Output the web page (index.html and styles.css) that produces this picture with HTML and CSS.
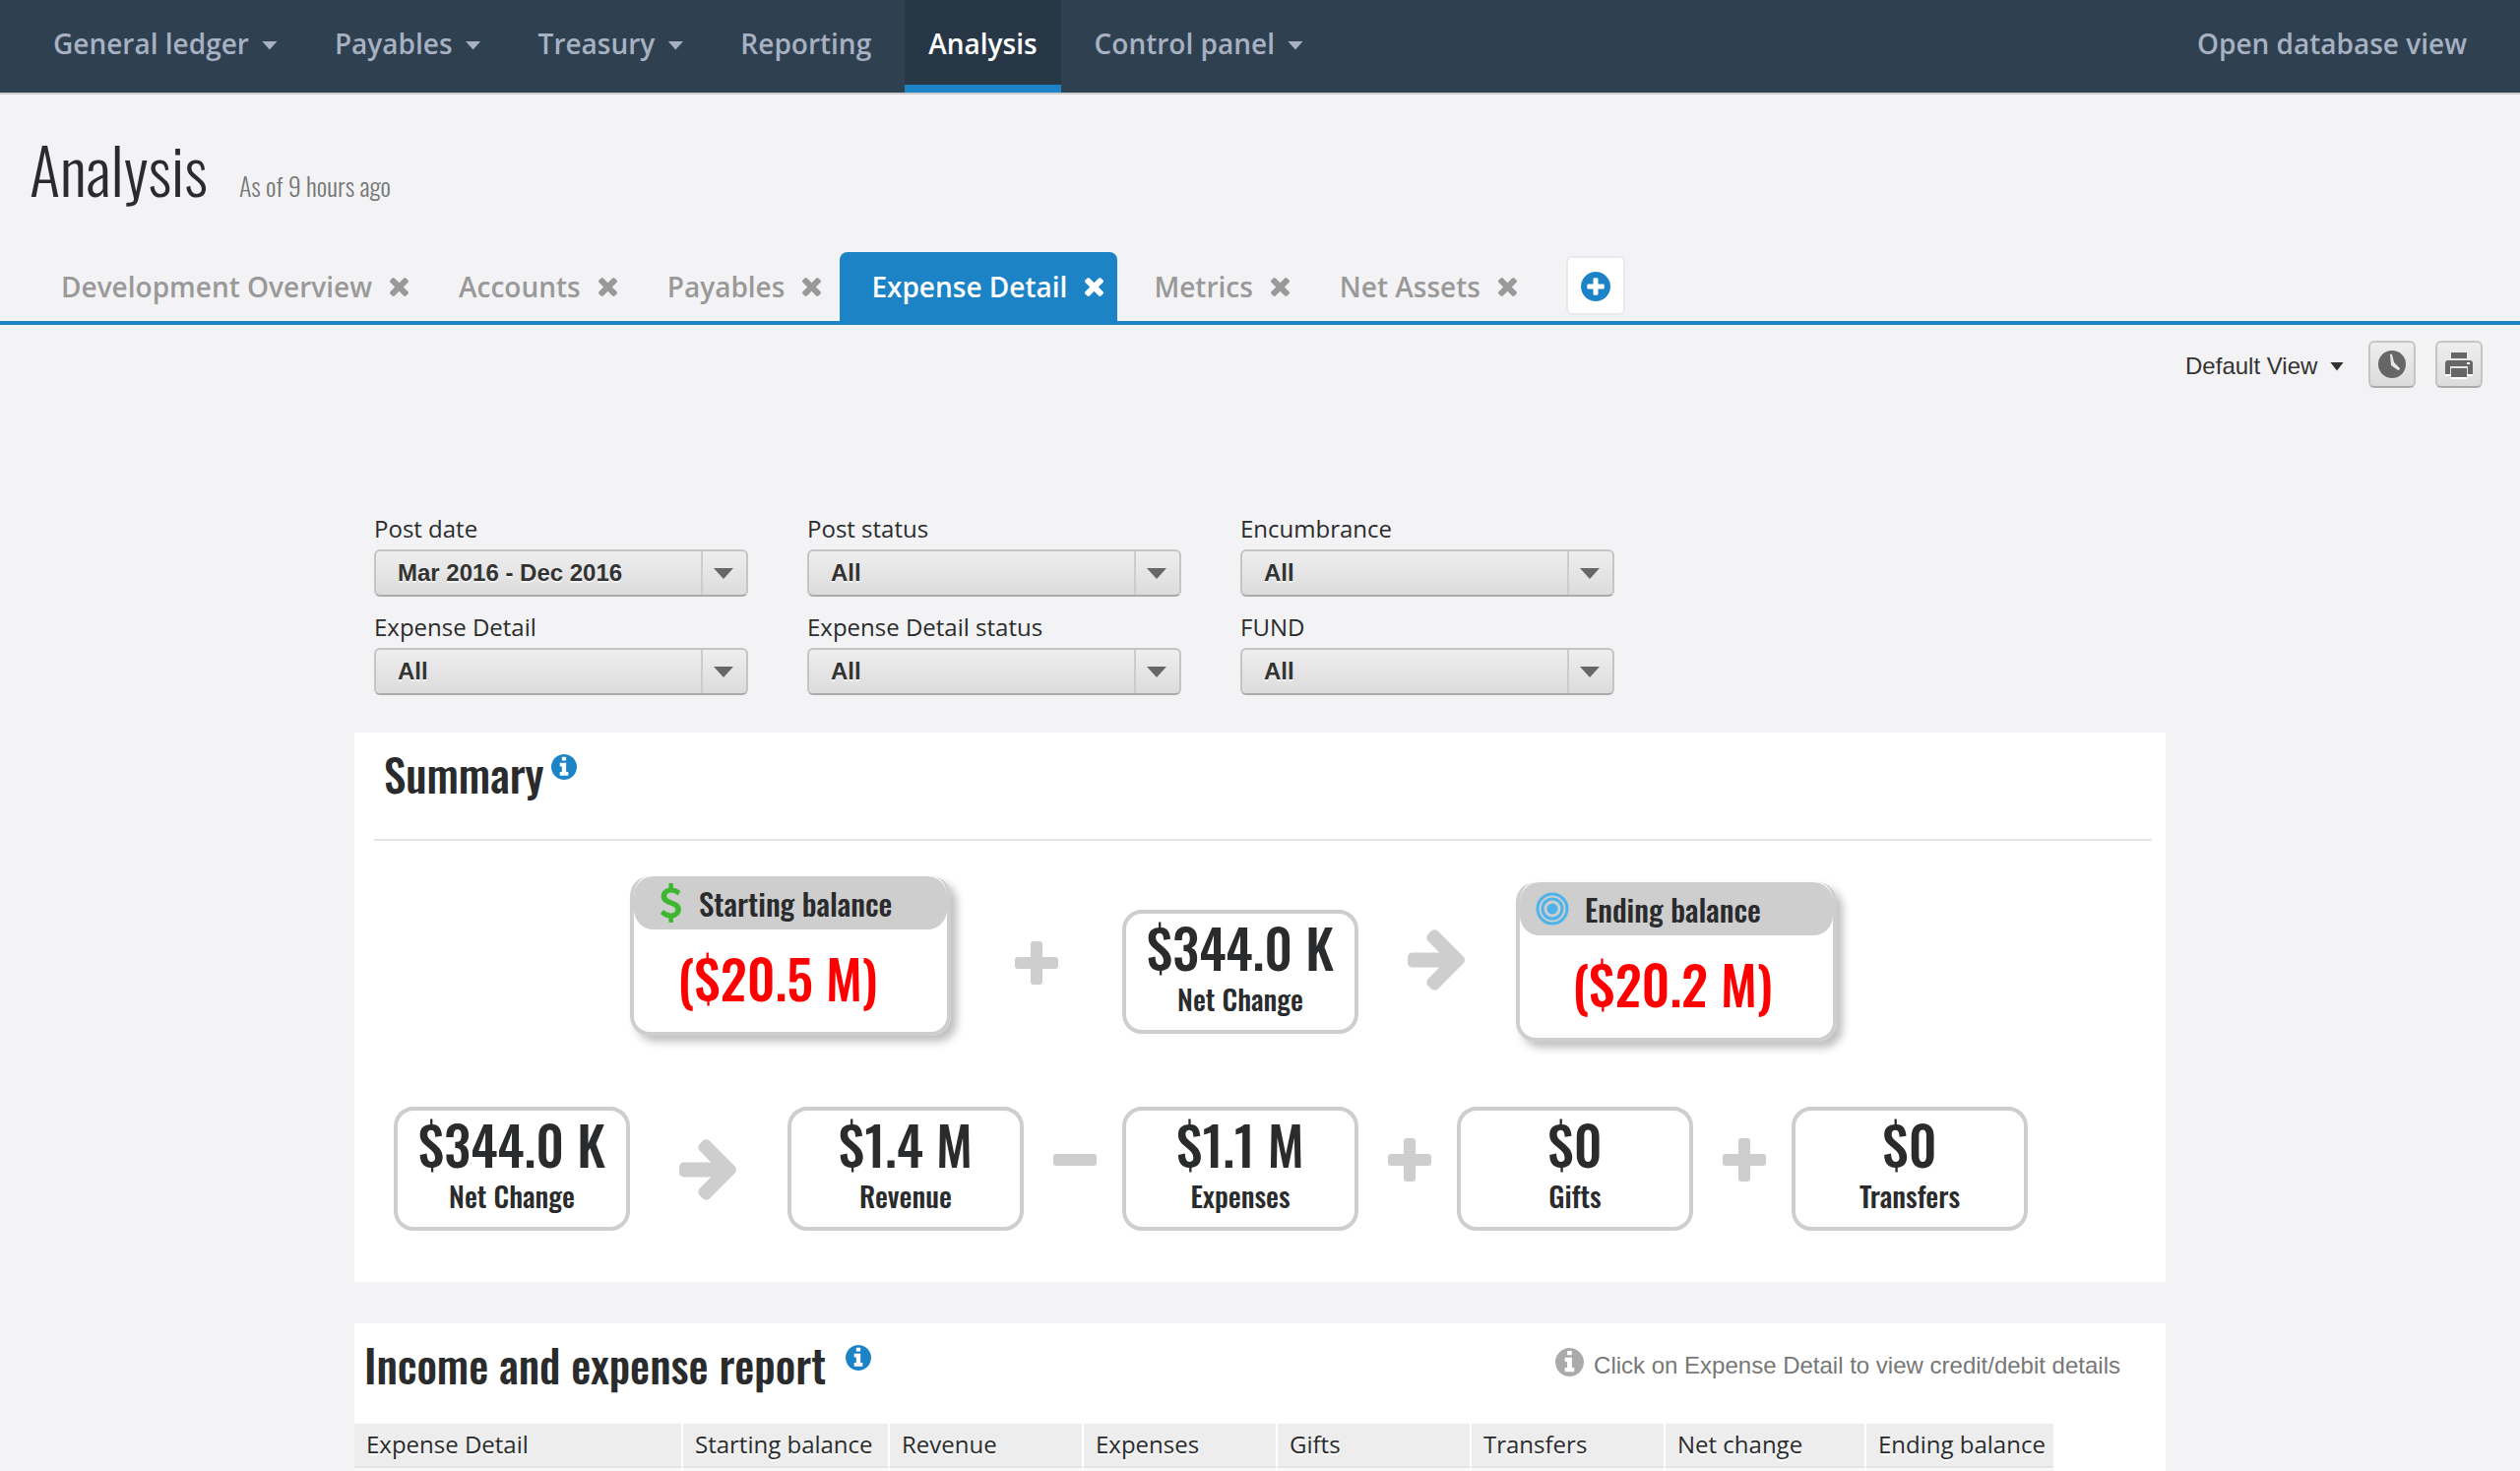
FILE: index.html
```html
<!DOCTYPE html>
<html lang="en">
<head>
<meta charset="utf-8">
<title>Analysis</title>
<link rel="stylesheet" href="styles.css">
</head>
<body>
<svg class="sprite" aria-hidden="true">
  <symbol id="times" viewBox="302 366 1188 1188"><path d="M1490 1322q0 40-28 68l-136 136q-28 28-68 28t-68-28l-294-294-294 294q-28 28-68 28t-68-28l-136-136q-28-28-28-68t28-68l294-294-294-294q-28-28-28-68t28-68l136-136q28-28 68-28t68 28l294 294 294-294q28-28 68-28t68 28l136 136q28 28 28 68t-28 68l-294 294 294 294q28 28 28 68z"/></symbol>
  <symbol id="info" viewBox="128 128 1536 1536"><path d="M1152 1376v-160q0-14-9-23t-23-9h-96v-512q0-14-9-23t-23-9h-320q-14 0-23 9t-9 23v160q0 14 9 23t23 9h96v320h-96q-14 0-23 9t-9 23v160q0 14 9 23t23 9h448q14 0 23-9t9-23zm-128-896v-160q0-14-9-23t-23-9h-192q-14 0-23 9t-9 23v160q0 14 9 23t23 9h192q14 0 23-9t9-23zm640 416q0 209-103 385.500t-279.500 279.500-385.500 103-385.500-103-279.500-279.500-103-385.500 103-385.500 279.500-279.500 385.500-103 385.500 103 279.500 279.500 103 385.500z"/></symbol>
  <symbol id="add" viewBox="128 128 1536 1536"><path d="M1344 960v-128q0-26-19-45t-45-19h-256v-256q0-26-19-45t-45-19h-128q-26 0-45 19t-19 45v256h-256q-26 0-45 19t-19 45v128q0 26 19 45t45 19h256v256q0 26 19 45t45 19h128q26 0 45-19t19-45v-256h256q26 0 45-19t19-45zm320-64q0 209-103 385.500t-279.500 279.500-385.500 103-385.500-103-279.500-279.500-103-385.500 103-385.500 279.500-279.500 385.500-103 385.500 103 279.500 279.500 103 385.500z"/></symbol>
  <symbol id="arrow" viewBox="128 181 1472 1558"><path d="M1600 960q0 54-37 91l-651 651q-39 37-91 37-51 0-90-37l-75-75q-38-38-38-91t38-91l293-293h-704q-52 0-84.500-37.500t-32.500-90.500v-128q0-53 32.500-90.500t84.500-37.500h704l-293-294q-38-36-38-90t38-90l75-75q38-38 90-38 53 0 91 38l651 651q37 35 37 90z"/></symbol>
  <symbol id="plus" viewBox="0 0 44 44"><rect x="16" width="12" height="44" rx="3"/><rect y="16" width="44" height="12" rx="3"/></symbol>
  <symbol id="minus" viewBox="0 0 44 44"><rect y="16" width="44" height="12" rx="3"/></symbol>
  <symbol id="dollar" viewBox="434 0 928 1792"><path d="M1362 1185q0 153-99.500 263.500t-258.500 136.500v175q0 14-9 23t-23 9h-135q-13 0-22.500-9.500t-9.500-22.500v-175q-66-9-127.500-31t-101.500-44.500-74-48-46.500-37.500-17.500-18q-17-21-2-41l103-135q7-10 23-12 15-2 24 9l2 2q113 99 243 125 37 8 74 8 81 0 142.500-43t61.500-122q0-28-15-53t-33.500-42-58.500-37.500-66-32-80-32.500q-39-16-61.500-25t-61.500-26.500-62.500-31-56.500-35.500-53.500-42.500-43.500-49-35.500-58-21-66.500-8.500-78q0-138 98-242t255-134v-180q0-13 9.500-22.500t22.500-9.500h135q14 0 23 9t9 23v176q57 6 110.500 23t87 33.500 63.500 37.500 39 29 15 14q17 18 5 38l-81 146q-8 15-23 16-14 3-27-7-3-3-14.500-12t-39-26.500-58.500-32-74.500-26-85.500-11.500q-95 0-155 43t-60 111q0 26 8.500 48t29.500 41.500 39.500 33 56 31 60.500 27 70 27.500q53 20 81 31.500t76 35 75.500 42.500 62 50 53 63.500 31.500 76.500 13 94z"/></symbol>
</svg>

<header class="topbar">
  <nav class="menu" aria-label="Main">
    <a class="menu-item" href="#">General ledger <span class="caret"></span></a>
    <a class="menu-item" href="#">Payables <span class="caret"></span></a>
    <a class="menu-item" href="#">Treasury <span class="caret"></span></a>
    <a class="menu-item" href="#">Reporting</a>
    <a class="menu-item active" href="#" aria-current="page">Analysis</a>
    <a class="menu-item" href="#">Control panel <span class="caret"></span></a>
  </nav>
  <a class="menu-item" href="#">Open database view</a>
</header>

<div class="page-head">
  <h1>Analysis</h1>
  <span class="as-of">As of 9 hours ago</span>
</div>

<nav class="tabs" aria-label="Dashboards">
  <div class="tab"><a href="#">Development Overview</a><button type="button" aria-label="Close"><svg class="x"><use href="#times"/></svg></button></div>
  <div class="tab"><a href="#">Accounts</a><button type="button" aria-label="Close"><svg class="x"><use href="#times"/></svg></button></div>
  <div class="tab"><a href="#">Payables</a><button type="button" aria-label="Close"><svg class="x"><use href="#times"/></svg></button></div>
  <div class="tab active"><a href="#">Expense Detail</a><button type="button" aria-label="Close"><svg class="x"><use href="#times"/></svg></button></div>
  <div class="tab"><a href="#">Metrics</a><button type="button" aria-label="Close"><svg class="x"><use href="#times"/></svg></button></div>
  <div class="tab"><a href="#">Net Assets</a><button type="button" aria-label="Close"><svg class="x"><use href="#times"/></svg></button></div>
  <button class="tab-add" type="button" aria-label="Add tab"><svg><use href="#add"/></svg></button>
</nav>

<div class="toolbar">
  <button class="view" type="button">Default View <span class="caret"></span></button>
  <button class="tool" type="button" aria-label="History"><svg viewBox="0 0 30 30"><circle cx="15" cy="15" r="14"/><path class="hand" d="M13 5q1-1 2 0l2 8 6 6q0 2-2 2l-7-5z"/></svg></button>
  <button class="tool" type="button" aria-label="Print"><svg viewBox="0 0 30 30"><path class="sheen" d="M1 25h28v2H23v3H7v-3H1z"/><path d="M7 3h16v6H7zM4 11h22a3 3 0 0 1 3 3v11h-5v-8H6v8H1V14a3 3 0 0 1 3-3zM7 19h16v9H7z"/><rect class="sheen" x="23" y="13" width="3" height="2"/></svg></button>
</div>

<main class="content">
  <form class="filters">
    <div class="field"><label for="f1">Post date</label><div class="select"><select id="f1"><option>Mar 2016 - Dec 2016</option></select></div></div>
    <div class="field"><label for="f2">Post status</label><div class="select"><select id="f2"><option>All</option></select></div></div>
    <div class="field"><label for="f3">Encumbrance</label><div class="select"><select id="f3"><option>All</option></select></div></div>
    <div class="field"><label for="f4">Expense Detail</label><div class="select"><select id="f4"><option>All</option></select></div></div>
    <div class="field"><label for="f5">Expense Detail status</label><div class="select"><select id="f5"><option>All</option></select></div></div>
    <div class="field"><label for="f6">FUND</label><div class="select"><select id="f6"><option>All</option></select></div></div>
  </form>

  <section class="panel summary">
    <div class="summary-head"><h2>Summary</h2><svg class="info"><use href="#info"/></svg></div>
    <div class="flow balances">
      <div class="balance">
        <div class="balance-head"><svg class="dollar"><use href="#dollar"/></svg><span>Starting balance</span></div>
        <div class="value negative">($20.5 M)</div>
      </div>
      <svg class="op"><use href="#plus"/></svg>
      <div class="box"><div class="value">$344.0 K</div><div class="caption">Net Change</div></div>
      <svg class="op arrow"><use href="#arrow"/></svg>
      <div class="balance ending">
        <div class="balance-head"><svg class="target" viewBox="0 0 34 34"><circle cx="17" cy="17" r="15"/><circle cx="17" cy="17" r="10"/><circle class="dot" cx="17" cy="17" r="4"/></svg><span>Ending balance</span></div>
        <div class="value negative">($20.2 M)</div>
      </div>
    </div>
    <div class="flow changes">
      <div class="box"><div class="value">$344.0 K</div><div class="caption">Net Change</div></div>
      <svg class="op arrow"><use href="#arrow"/></svg>
      <div class="box"><div class="value">$1.4 M</div><div class="caption">Revenue</div></div>
      <svg class="op"><use href="#minus"/></svg>
      <div class="box"><div class="value">$1.1 M</div><div class="caption">Expenses</div></div>
      <svg class="op"><use href="#plus"/></svg>
      <div class="box"><div class="value">$0</div><div class="caption">Gifts</div></div>
      <svg class="op"><use href="#plus"/></svg>
      <div class="box"><div class="value">$0</div><div class="caption">Transfers</div></div>
    </div>
  </section>

  <section class="panel report">
    <div class="report-head">
      <h2>Income and expense report</h2><svg class="info"><use href="#info"/></svg>
      <p class="hint"><svg><use href="#info"/></svg>Click on Expense Detail to view credit/debit details</p>
    </div>
    <table>
      <colgroup><col class="c-name"><col class="c-start"><col class="c-mid"><col class="c-mid"><col class="c-mid"><col class="c-mid"><col class="c-net"><col class="c-end"></colgroup>
      <thead><tr><th>Expense Detail</th><th>Starting balance</th><th>Revenue</th><th>Expenses</th><th>Gifts</th><th>Transfers</th><th>Net change</th><th>Ending balance</th></tr></thead>
      <tbody><tr><td></td><td></td><td></td><td></td><td></td><td></td><td></td><td></td></tr></tbody>
    </table>
  </section>
</main>
</body>
</html>
```
FILE: styles.css
```css
* { box-sizing: border-box; }
body {
  margin: 0;
  background: #f3f3f5;
  color: #2a2b2d;
  font-family: "Open Sans", sans-serif;
  font-size: 24px;
}
h1, h2, p { margin: 0; font-weight: 400; }
a { color: inherit; text-decoration: none; }
button { margin: 0; padding: 0; border: 0; background: none; color: inherit; font: inherit; }
svg { display: block; fill: currentColor; flex: none; }
.sprite { position: absolute; width: 0; height: 0; }
.caret {
  display: inline-block;
  width: 16px;
  height: 9px;
  margin: 4px 0 0 13px;
  background: currentColor;
  clip-path: polygon(0 0, 100% 0, 50% 100%);
}

.topbar {
  display: flex;
  justify-content: space-between;
  padding: 0 30px;
  background: #2f4050;
  border-bottom: 2px solid #ccc;
}
.menu { display: flex; gap: 10px; }
.menu-item {
  display: flex;
  align-items: center;
  height: 94px;
  padding: 0 24px 6px;
  color: #a7b1c2;
  font-size: 28px;
  font-weight: 600;
}
.menu-item.active {
  padding-top: 2px;
  padding-bottom: 0;
  color: #fff;
  background: #283746;
  border-bottom: 8px solid #1c84c6;
}

.page-head {
  display: flex;
  align-items: baseline;
  gap: 32px;
  height: 160px;
  padding: 30px 30px 0;
  font-family: Oswald, "Roboto Condensed", "Liberation Sans Narrow", sans-serif;
}
h1 { font-size: 65px; line-height: 90px; font-weight: 300; }
.as-of { font-size: 26px; color: #777; font-weight: 300; }

.tabs {
  display: flex;
  align-items: flex-end;
  gap: 5px;
  padding: 0 30px;
  border-bottom: 4px solid #1c84c6;
}
.tab {
  display: flex;
  align-items: center;
  gap: 18px;
  height: 70px;
  padding: 0 14px 0 32px;
  border-radius: 8px 8px 0 0;
  color: #999;
  font-size: 28px;
  font-weight: 600;
}
.tab.active { background: #1c84c6; color: #fff; }
.x { width: 19px; height: 19px; }
.tab-add {
  display: grid;
  place-items: center;
  width: 60px;
  height: 60px;
  margin: 0 0 6px 31px;
  padding-top: 2px;
  background: #fff;
  border: 2px solid #e7eaec;
  border-radius: 6px;
  color: #1c84c6;
}
.tab-add svg { width: 30px; height: 30px; }

.toolbar {
  display: flex;
  justify-content: flex-end;
  align-items: center;
  gap: 20px;
  padding: 16px 38px 0;
}
.view { margin-right: 5px; padding-top: 3px; font-family: "Liberation Sans", Arial, sans-serif; font-size: 24px; color: #333; }
.view .caret { width: 14px; margin: 0 0 3px 6px; }
.tool {
  display: grid;
  place-items: center;
  width: 48px;
  height: 48px;
  border: 2px solid #c5c5c5;
  border-bottom-color: #aaa;
  border-radius: 6px;
  background: linear-gradient(#eee, #dcdcdc);
  color: #666;
}
.tool svg { width: 30px; height: 30px; }
.hand { fill: #e8e8e8; }
.sheen { fill: #fff; }

.content { max-width: 1840px; margin: 0 auto; }
.filters {
  display: grid;
  grid-template-columns: repeat(3, 380px);
  gap: 15px 60px;
  padding: 127px 20px 38px;
}
.field { display: grid; gap: 5px; }
label { line-height: 32px; }
.select { position: relative; }
.select::after {
  content: "";
  position: absolute;
  top: 19px;
  right: 15px;
  width: 20px;
  height: 11px;
  background: #666;
  clip-path: polygon(0 0, 100% 0, 50% 100%);
  pointer-events: none;
}
select {
  appearance: none;
  display: block;
  width: 100%;
  height: 48px;
  padding: 0 60px 2px 22px;
  border: 2px solid #c5c5c5;
  border-bottom-color: #aaa;
  border-radius: 6px;
  background: linear-gradient(#ccc, #ccc) right 44px top / 2px 100% no-repeat, linear-gradient(#eee, #dcdcdc);
  color: #333;
  font: bold 24px "Liberation Sans", Arial, sans-serif;
  text-shadow: 0 2px 0 #f3f3f3;
}

.panel {
  background: #fff;
  font-family: Oswald, "Roboto Condensed", "Liberation Sans Narrow", sans-serif;
  font-weight: 500;
}
h2 { font-size: 45px; line-height: 55px; font-weight: 500; }
.info { width: 26px; height: 26px; color: #1c84c6; }

.summary { padding: 14px 14px 52px 20px; }
.summary-head {
  display: flex;
  gap: 7px;
  height: 96px;
  padding-left: 10px;
  border-bottom: 2px solid #e5e5e5;
}
.summary-head .info { margin-top: 8px; }
.flow { display: grid; align-items: center; justify-items: center; }
.balances { grid-template-columns: 326px 174px 240px 160px 326px; padding: 36px 0 0 260px; }
.changes { grid-template-columns: 240px 160px 240px 100px 240px 100px 240px 100px 240px; padding: 66px 0 0 20px; }
.op { width: 44px; height: 44px; color: #cecece; }
.op.arrow { width: 58px; height: 62px; }
.balances .op:not(.arrow) { margin-top: 8px; }
.changes .op:not(.arrow) { margin: 0 0 18px 4px; }
.op.arrow { margin: 2px 2px 0 0; }
.box {
  width: 240px;
  height: 126px;
  border: 4px solid #cecece;
  border-radius: 20px;
  text-align: center;
}
.balances .box { align-self: end; margin-bottom: 8px; }
.value { font-size: 54px; line-height: 68px; }
.caption { font-size: 29px; line-height: 36px; }
.balance {
  align-self: start;
  width: 326px;
  height: 162px;
  margin-bottom: 6px;
  border: 4px solid #cecece;
  border-top: 0;
  border-radius: 20px;
  box-shadow: 6px 6px 8px rgba(0, 0, 0, .25);
}
.balance.ending { margin: 6px 0 0; }
.balance-head {
  display: flex;
  align-items: center;
  gap: 18px;
  height: 54px;
  padding-left: 27px;
  border-radius: 20px;
  background: #cecece;
  font-size: 31px;
}
.ending .balance-head { gap: 16px; padding-left: 16px; }
.dollar { width: 21px; height: 40px; color: #3cb72e; }
.target { width: 34px; height: 34px; fill: none; stroke: #4db3ea; stroke-width: 3; }
.dot { fill: #4db3ea; }
.balance .value { margin: 15px 26px 0 0; text-align: center; }
.balance.ending .value { margin-right: 8px; }
.negative { color: #f00; }

.report { margin-top: 42px; }
.report-head { display: flex; height: 102px; padding: 14px 46px 0 10px; }
.report-head .info { margin: 8px 0 0 20px; }
.hint {
  display: flex;
  gap: 10px;
  margin-left: auto;
  padding-top: 11px;
  color: #777;
  font-family: "Liberation Sans", Arial, sans-serif;
  font-size: 24px;
  font-weight: 400;
  line-height: 36px;
}
.hint svg { width: 29px; height: 29px; color: #aaa; }

table { width: 1726px; table-layout: fixed; border-collapse: separate; border-spacing: 0; font-family: "Open Sans", sans-serif; }
.c-name { width: 334px; }
.c-start { width: 210px; }
.c-mid { width: 197px; }
.c-net { width: 204px; }
.c-end { width: 190px; }
th {
  height: 45px;
  padding: 0 0 2px 12px;
  border-right: 2px solid #fff;
  border-bottom: 2px solid #e5e5e5;
  background: #ededed;
  font-weight: 400;
  line-height: 34px;
  text-align: left;
  text-shadow: 0 2px 0 #fff;
  white-space: nowrap;
}
td { height: 3px; padding: 0; border-right: 2px solid #fff; background: #f9f9f9; }
th:last-child, td:last-child { border-right: 0; }
```
